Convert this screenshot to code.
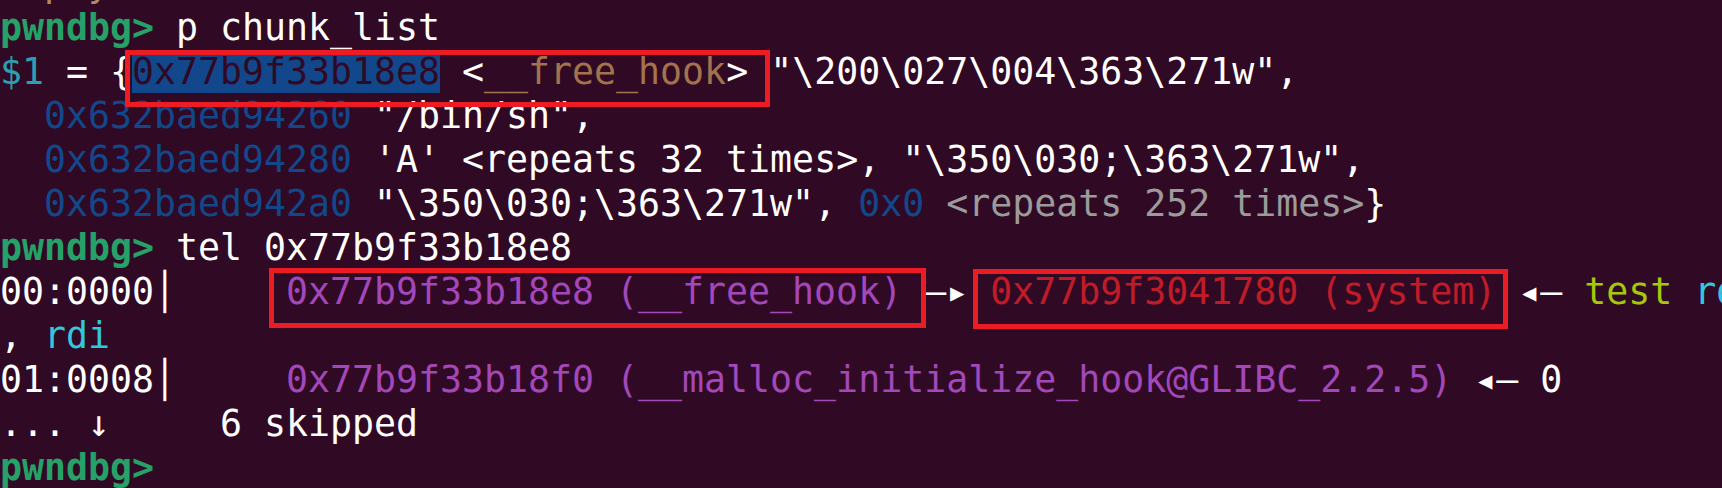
import React from "react";

const W = "text-white";
const G = "text-[#26A269] font-bold";
const BLUE = "text-[#12488B]";
const CYAN = "text-[#2AA1B3]";
const BROWN = "text-[#A2734C]";
const GRAY = "text-[#9B9B9B]";
const PURPLE = "text-[#A347BA]";
const RED = "text-[#C01C28]";
const LIME = "text-[#A7C80A]";
const BCYAN = "text-[#33C7DE]";
const SEL = "bg-[#12488B] text-[#300A24]";

// previous output line is mostly scrolled off; only descenders show
const LINES = [
  [["empty", "text-[#B08A66]"]],
  [["pwndbg> ", G], ["p chunk_list", W]],
  [
    ["$1", CYAN],
    [" = {", W],
    ["0x77b9f33b18e8", SEL],
    [" <", W],
    ["__free_hook", BROWN],
    [">", W],
    [" \"\\200\\027\\004\\363\\271w\",", W],
  ],
  [["  ", W], ["0x632baed94260", BLUE], [" \"/bin/sh\",", W]],
  [
    ["  ", W],
    ["0x632baed94280", BLUE],
    [" 'A' <repeats 32 times>, \"\\350\\030;\\363\\271w\",", W],
  ],
  [
    ["  ", W],
    ["0x632baed942a0", BLUE],
    [" \"\\350\\030;\\363\\271w\", ", W],
    ["0x0", BLUE],
    [" ", W],
    ["<repeats 252 times>", GRAY],
    ["}", W],
  ],
  [["pwndbg> ", G], ["tel 0x77b9f33b18e8", W]],
  [
    ["00:0000│     ", W],
    ["0x77b9f33b18e8 (__free_hook)", PURPLE],
    [" —▸ ", W],
    ["0x77b9f3041780 (system)", RED],
    [" ◂— ", W],
    ["test", LIME],
    [" ", W],
    ["rdi", BCYAN],
  ],
  [[", ", W], ["rdi", BCYAN]],
  [
    ["01:0008│     ", W],
    ["0x77b9f33b18f0 (__malloc_initialize_hook@GLIBC_2.2.5)", PURPLE],
    [" ◂— 0", W],
  ],
  [["... ↓     6 skipped", W]],
  [["pwndbg> ", G]],
];

export default function App() {
  return (
    <div className="relative w-[1722px] h-[488px] overflow-hidden bg-[#300A24] font-['DejaVu_Sans_Mono','Liberation_Mono',monospace] text-[36.55px]">
      <div className="-mt-[38px]">
        {LINES.map((segs, i) => (
          <div key={i} className="h-[44px] leading-[44px] whitespace-pre">
            {segs.map(([t, c], j) => (
              <span key={j} className={c}>
                {t}
              </span>
            ))}
          </div>
        ))}
      </div>

      {/* annotation boxes */}
      <div className="absolute left-[125px] top-[50px] w-[645px] h-[57px] border-[5px] border-[#ED1C24]" />
      <div className="absolute left-[269px] top-[268px] w-[657px] h-[60px] border-[5px] border-[#ED1C24]" />
      <div className="absolute left-[973px] top-[269px] w-[535px] h-[60px] border-[5px] border-[#ED1C24]" />
    </div>
  );
}
